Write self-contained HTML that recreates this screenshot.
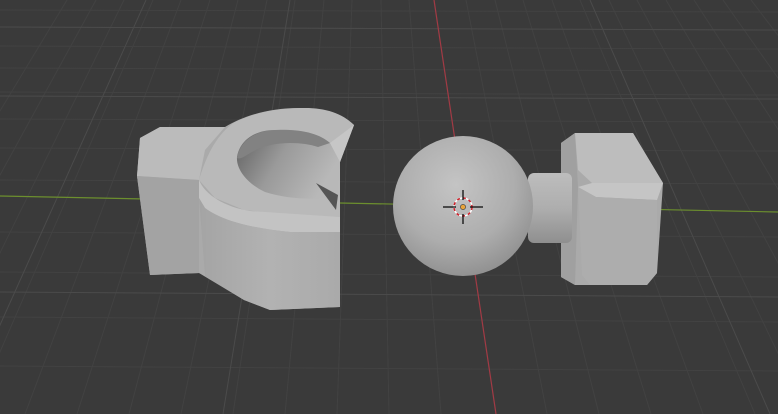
<!DOCTYPE html>
<html><head><style>html,body{margin:0;padding:0;background:#3a3a3a;overflow:hidden}svg{display:block}</style></head>
<body>
<svg width="778" height="414" viewBox="0 0 778 414" xmlns="http://www.w3.org/2000/svg">
<defs>
<radialGradient id="sph" cx="0.45" cy="0.35" r="0.7"><stop offset="0" stop-color="#c4c4c4"/><stop offset="0.6" stop-color="#adadad"/><stop offset="1" stop-color="#8c8c8c"/></radialGradient>
<linearGradient id="cyl" x1="0" y1="0" x2="0" y2="1"><stop offset="0" stop-color="#bdbdbd"/><stop offset="0.5" stop-color="#aeaeae"/><stop offset="1" stop-color="#8f8f8f"/></linearGradient>
<linearGradient id="front" x1="0" y1="0" x2="1" y2="0"><stop offset="0" stop-color="#a4a4a4"/><stop offset="0.5" stop-color="#b2b2b2"/><stop offset="1" stop-color="#aaaaaa"/></linearGradient>
<linearGradient id="hole" x1="0" y1="0" x2="1" y2="0.4"><stop offset="0" stop-color="#5e5e5e"/><stop offset="0.5" stop-color="#9a9a9a"/><stop offset="1" stop-color="#b8b8b8"/></linearGradient>
</defs>
<rect width="778" height="414" fill="#3a3a3a"/>
<g stroke="#424242" stroke-width="1">
<line x1="0" y1="10" x2="778" y2="12"/><line x1="0" y1="27" x2="778" y2="30"/><line x1="0" y1="46" x2="778" y2="49"/><line x1="0" y1="68" x2="778" y2="71"/><line x1="0" y1="92" x2="778" y2="95"/><line x1="0" y1="119" x2="778" y2="122"/><line x1="0" y1="148" x2="778" y2="151"/><line x1="0" y1="180" x2="778" y2="184"/><line x1="0" y1="232" x2="778" y2="237"/><line x1="0" y1="272" x2="778" y2="277"/><line x1="0" y1="317" x2="778" y2="322"/><line x1="0" y1="366" x2="778" y2="371"/>
<line x1="67" y1="0" x2="-183" y2="414"/><line x1="96" y1="0" x2="-131" y2="414"/><line x1="124" y1="0" x2="-79" y2="414"/><line x1="153" y1="0" x2="-27" y2="414"/><line x1="181" y1="0" x2="25" y2="414"/><line x1="210" y1="0" x2="77" y2="414"/><line x1="238" y1="0" x2="129" y2="414"/><line x1="267" y1="0" x2="181" y2="414"/><line x1="295" y1="0" x2="233" y2="414"/><line x1="324" y1="0" x2="285" y2="414"/><line x1="352" y1="0" x2="337" y2="414"/><line x1="381" y1="0" x2="389" y2="414"/><line x1="409" y1="0" x2="441" y2="414"/><line x1="466" y1="0" x2="547" y2="414"/><line x1="495" y1="0" x2="599" y2="414"/><line x1="523" y1="0" x2="651" y2="414"/><line x1="552" y1="0" x2="703" y2="414"/><line x1="580" y1="0" x2="755" y2="414"/><line x1="609" y1="0" x2="807" y2="414"/><line x1="637" y1="0" x2="859" y2="414"/><line x1="666" y1="0" x2="911" y2="414"/><line x1="694" y1="0" x2="963" y2="414"/><line x1="723" y1="0" x2="1015" y2="414"/><line x1="751" y1="0" x2="1067" y2="414"/>
</g>
<g stroke="#4b4b4b" stroke-width="1"><line x1="0" y1="27" x2="778" y2="30"/><line x1="0" y1="96" x2="778" y2="99"/><line x1="0" y1="292" x2="778" y2="297"/><line x1="146" y1="0" x2="-40" y2="414"/><line x1="290" y1="0" x2="223" y2="414"/><line x1="590" y1="0" x2="770" y2="414"/></g>
<line x1="0" y1="196" x2="778" y2="212" stroke="#6c8f2e" stroke-width="1.2"/>
<line x1="434" y1="0" x2="496" y2="414" stroke="#a23a45" stroke-width="1.2"/>

<!-- left clip -->
<path d="M137 176 L140 138 L160 127 L225 127 C245 115 270 108 300 108 C320 108 340 112 354 125 L340 162 L340 307 L270 310 L244 300 L199 273 L150 275 Z" fill="#aaaaaa"/>
<path d="M137 176 L140 138 L160 127 L225 127 L205 150 L199 180 Z" fill="#bbbbbb"/>
<path d="M137 176 L199 180 L199 273 L150 275 Z" fill="#a3a3a3"/>
<path d="M199 180 C205 160 215 135 235 122 C260 110 285 108 305 108 C325 108 342 113 354 125 L340 162 L340 217 L290 215 L244 210 L215 198 Z" fill="#b9b9b9"/>
<path d="M199 180 C205 195 225 207 250 211 L340 217 L340 232 L290 232 C260 229 225 223 205 208 L199 198 Z" fill="#c3c3c3"/>
<path d="M199 198 L205 208 C225 223 260 229 290 232 L340 232 L340 307 L270 310 L244 300 L205 276 Z" fill="url(#front)"/>
<path d="M237 157 C240 140 255 130 275 130 C300 129 320 134 330 143 L340 162 L337 196 C320 200 290 200 265 192 C248 184 236 170 237 157 Z" fill="url(#hole)"/>
<path d="M237 158 C240 140 256 130 278 130 C302 129 320 134 330 143 L318 147 C300 141 270 141 252 152 C245 156 240 160 237 158 Z" fill="#828282"/>
<path d="M316 183 L338 195 L336 210 Z" fill="#555"/>
<path d="M330 143 L354 125 L340 162 Z" fill="#c6c6c6"/>

<!-- right box -->
<path d="M561 143 L575 133 L633 133 L663 183 L657 273 L647 285 L575 285 L561 277 Z" fill="#aaaaaa"/>
<path d="M561 143 L575 133 L578 187 L575 285 L561 277 Z" fill="#a0a0a0"/>
<path d="M575 133 L633 133 L663 183 L592 183 L578 170 Z" fill="#bdbdbd"/>
<path d="M578 187 L592 183 L663 183 L657 200 L596 197 Z" fill="#c5c5c5"/>
<path d="M578 187 L596 197 L657 200 L657 273 L647 285 L590 285 L582 275 Z" fill="#adadad"/>
<!-- cylinder -->
<rect x="528" y="173" width="44" height="70" rx="6" fill="url(#cyl)"/>
<!-- sphere -->
<circle cx="463" cy="206" r="70" fill="url(#sph)"/>
<!-- 3D cursor -->
<circle cx="463" cy="207" r="9" fill="none" stroke="#fff" stroke-width="1.5"/>
<circle cx="463" cy="207" r="9" fill="none" stroke="#d0202a" stroke-width="1.5" stroke-dasharray="3 3"/>
<g stroke="#000" stroke-width="1.2"><line x1="443" y1="207" x2="456" y2="207"/><line x1="470" y1="207" x2="483" y2="207"/><line x1="463" y1="190" x2="463" y2="200"/><line x1="463" y1="214" x2="463" y2="224"/></g>
<circle cx="463" cy="207" r="2.6" fill="#e8a33a" stroke="#333" stroke-width="0.6"/>
</svg>
</body></html>
